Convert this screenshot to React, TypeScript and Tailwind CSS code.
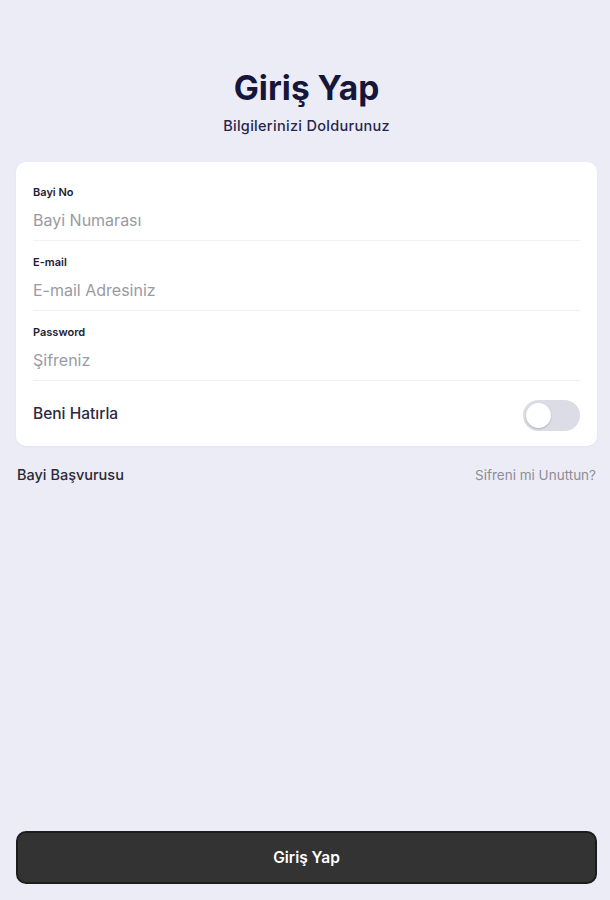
import { useState } from "react";

const font = { fontFamily: "Inter, 'Open Sans', sans-serif" };

const Field = ({ label, placeholder, first }: { label: string; placeholder: string; first?: boolean }) => (
  <div className={`border-b border-[#f1f1f4] pb-[10px] ${first ? "pt-[23px]" : "pt-[14px]"}`}>
    <p className="text-[11px] font-semibold leading-[14px] text-[#222235]">{label}</p>
    <input
      placeholder={placeholder}
      className="mt-[11px] block h-[20px] w-full bg-transparent p-0 text-[16px] leading-[20px] text-[#222] placeholder:text-[#9a9aa3] focus:outline-none"
    />
  </div>
);

export default function App() {
  const [remember, setRemember] = useState(false);

  return (
    <div style={font} className="flex min-h-[900px] flex-col bg-[#ececf6] pl-4 pr-[13px]">
      <div className="pt-[67px] text-center">
        <h1 className="text-[33.5px] font-bold leading-[42px] text-[#16163a]">Giriş Yap</h1>
        <p className="mt-[6px] text-[14.5px] font-medium tracking-[0.3px] text-[#26264a]">Bilgilerinizi Doldurunuz</p>
      </div>

      <div className="mt-[25px] rounded-[10px] bg-white px-[17px] shadow-[0_1px_3px_rgba(0,0,0,0.04)]">
        <Field first label="Bayi No" placeholder="Bayi Numarası" />
        <Field label="E-mail" placeholder="E-mail Adresiniz" />
        <Field label="Password" placeholder="Şifreniz" />
        <div className="flex h-[65px] items-center justify-between">
          <span className="text-[15.5px] font-medium text-[#2a2a45]">Beni Hatırla</span>
          <button
            onClick={() => setRemember(!remember)}
            className={`mt-[4px] flex h-[31px] w-[57px] items-center rounded-full p-[3px] ${remember ? "justify-end bg-[#333]" : "bg-[#dcdce6]"}`}
          >
            <span className="h-[25px] w-[25px] rounded-full bg-white shadow-[0_1px_2px_rgba(0,0,0,0.2)]" />
          </button>
        </div>
      </div>

      <div className="mt-[19px] flex items-center justify-between px-[1px]">
        <span className="text-[14.5px] font-medium leading-[20px] text-[#2a2a35]">Bayi Başvurusu</span>
        <span className="text-[13.5px] leading-[20px] text-[#8d8d96]">Sifreni mi Unuttun?</span>
      </div>

      <div className="flex-1" />

      <button className="mb-[16px] h-[53px] w-full rounded-[10px] border-2 border-[#1c1c1c] bg-[#333333] text-[15.5px] font-semibold text-white">
        Giriş Yap
      </button>
    </div>
  );
}
